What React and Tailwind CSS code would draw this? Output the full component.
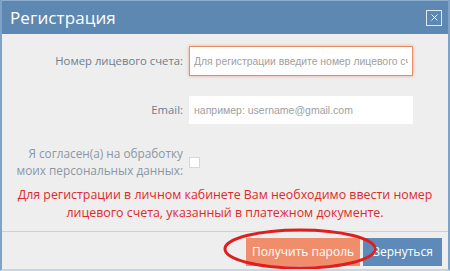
import { X } from 'lucide-react';

export default function App() {
  return (
    <div className="w-[450px] h-[271px] overflow-hidden bg-[#eeeeee] font-['Open_Sans',sans-serif] border-x-2 border-b-2 border-x-[#7fa3c6] border-b-[#c9d6e2] flex flex-col relative">
      {/* Header */}
      <div className="h-[34px] shrink-0 bg-[#5d88b1] border-t border-[#8eaed0] flex items-center justify-between pl-[8px] pr-[6px]">
        <h1 className="text-[17px] text-white leading-none tracking-[0.1px]">Регистрация</h1>
        <button className="w-[16px] h-[16px] border border-[#dfe8f1] flex items-center justify-center text-white">
          <X size={11} strokeWidth={2} />
        </button>
      </div>

      {/* Form */}
      <div className="flex flex-col pt-[12px]">
        <div className="flex items-center h-[30px]">
          <label className="w-[187px] pr-[6px] text-right text-[11.3px] text-[#6d7d8e]">Номер лицевого счета:</label>
          <input
            className="w-[224px] h-[30px] bg-white border border-[#e98d69] shadow-[0_0_3px_#f0a486] px-[4px] text-[10.4px] font-['Liberation_Sans',sans-serif] placeholder:text-[#a0a0a0] outline-none"
            placeholder="Для регистрации введите номер лицевого счета"
          />
        </div>
        <div className="flex items-center h-[28px] mt-[20px]">
          <label className="w-[187px] pr-[6px] text-right text-[11.3px] text-[#6d7d8e]">Email:</label>
          <input
            className="w-[224px] h-[28px] bg-white px-[5px] text-[10.5px] font-['Liberation_Sans',sans-serif] placeholder:text-[#a0a0a0] outline-none"
            placeholder="например: username@gmail.com"
          />
        </div>
        <div className="flex items-center mt-[21px]">
          <label className="w-[187px] pr-[6px] text-right text-[11.8px] leading-[17px] text-[#8a97a5]">
            Я согласен(а) на обработку<br />моих персональных данных:
          </label>
          <div className="w-[11px] h-[11px] bg-white border border-[#d6d6d6]" />
        </div>
        <p className="mt-[7px] text-center text-[12.4px] leading-[18px] text-[#e02a2a]">
          Для регистрации в личном кабинете Вам необходимо ввести номер<br />
          лицевого счета, указанный в платежном документе.
        </p>
      </div>

      {/* Footer */}
      <div className="mt-[9px] border-t border-[#cfcfcf] flex justify-end items-start pt-[6px] pr-[6px] gap-[3px]">
        <button className="w-[114px] h-[28px] bg-[#f08e6c] text-white text-[12px]">Получить пароль</button>
        <button className="w-[79px] h-[28px] bg-[#5d8ab8] text-white text-[12px]">Вернуться</button>
      </div>

      {/* Red annotation ellipse */}
      <svg className="absolute left-[219px] top-[226px] pointer-events-none" width="158" height="46" viewBox="0 0 158 46">
        <ellipse cx="79" cy="23" rx="75" ry="19" fill="none" stroke="#e01e1e" strokeWidth="3" />
      </svg>
    </div>
  );
}
